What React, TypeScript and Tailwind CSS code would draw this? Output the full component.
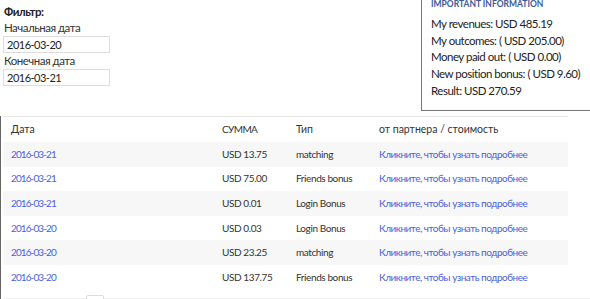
import React from "react";

const rows = [
  { date: "2016-03-21", sum: "USD 13.75", type: "matching" },
  { date: "2016-03-21", sum: "USD 75.00", type: "Friends bonus" },
  { date: "2016-03-21", sum: "USD 0.01", type: "Login Bonus" },
  { date: "2016-03-20", sum: "USD 0.03", type: "Login Bonus" },
  { date: "2016-03-20", sum: "USD 23.25", type: "matching" },
  { date: "2016-03-20", sum: "USD 137.75", type: "Friends bonus" },
];

const info = [
  "My revenues: USD 485.19",
  "My outcomes: ( USD 205.00)",
  "Money paid out: ( USD 0.00)",
  "New position bonus: ( USD 9.60)",
  "Result: USD 270.59",
];

export default function App() {
  return (
    <div className="w-[590px] h-[299px] overflow-hidden bg-white text-[#333] font-['Lato',sans-serif]">
      <div className="flex justify-between">
        {/* filter */}
        <div className="pt-[4px] pl-[3px] tracking-[-0.5px]">
          <div className="text-[11.5px] leading-[16px] font-bold pl-[1px] text-[#222]">Фильтр:</div>
          <div className="text-[11.5px] leading-[16px] pl-[1px]">Начальная дата</div>
          <input
            className="block w-[107px] h-[17px] border border-[#ddd] px-[3px] text-[11px] tracking-[-0.5px] text-[#222] outline-none"
            defaultValue="2016-03-20"
          />
          <div className="text-[11.5px] leading-[16px] pl-[1px]">Конечная дата</div>
          <input
            className="block w-[107px] h-[17px] border border-[#ddd] px-[3px] text-[11px] tracking-[-0.5px] text-[#222] outline-none"
            defaultValue="2016-03-21"
          />
        </div>

        {/* important info */}
        <div className="w-[180px] -mt-[10px] mr-[-11px] h-[121px] border border-[#777] pt-[7px] pl-[9px]">
          <div className="text-[8.5px] leading-[12px] font-bold uppercase text-[#3b5a9c]">Important Information</div>
          <div className="mt-[6px] text-[11.5px] tracking-[-0.5px] leading-[16.7px] text-[#222]">
            {info.map((l) => (
              <div key={l} className="whitespace-nowrap">{l}</div>
            ))}
          </div>
        </div>
      </div>

      <div className="mt-[5px] border-l border-[#666]">
        <div className="ml-[2px] w-[565px] border-t border-[#e6e6e6]">
          <table className="w-full border-collapse text-[10px] tracking-[-0.4px]">
            <thead>
              <tr className="h-[25px] text-left">
                <th className="w-[211px] pl-2 font-normal text-[10.5px] tracking-normal">Дата</th>
                <th className="w-[74px] pl-2 font-normal tracking-[-0.6px]">СУММА</th>
                <th className="w-[83px] pl-2 font-normal text-[10.5px] tracking-normal">Тип</th>
                <th className="pl-2 font-normal text-[10.5px] tracking-normal">от партнера / стоимость</th>
              </tr>
            </thead>
            <tbody>
              {rows.map((r, i) => (
                <tr key={i} className={`h-[24.6px] ${i % 2 === 0 ? "bg-[#f7f7f7]" : "bg-white"}`}>
                  <td className="pl-2 text-[#4b5fe0] tracking-[-0.9px]">{r.date}</td>
                  <td className="pl-2">{r.sum}</td>
                  <td className="pl-2">{r.type}</td>
                  <td className="pl-2 text-[#4b5fe0] tracking-[-0.5px] whitespace-nowrap">Кликните, чтобы узнать подробнее</td>
                </tr>
              ))}
            </tbody>
          </table>
          <div className="h-[8px]" />
        </div>
        <div className="relative border-t border-[#eee] ml-[2px]">
          <div className="absolute left-[83px] -top-[4px] w-[18px] h-[8px] border border-[#ddd] rounded-[2px] bg-white" />
        </div>
      </div>
    </div>
  );
}
